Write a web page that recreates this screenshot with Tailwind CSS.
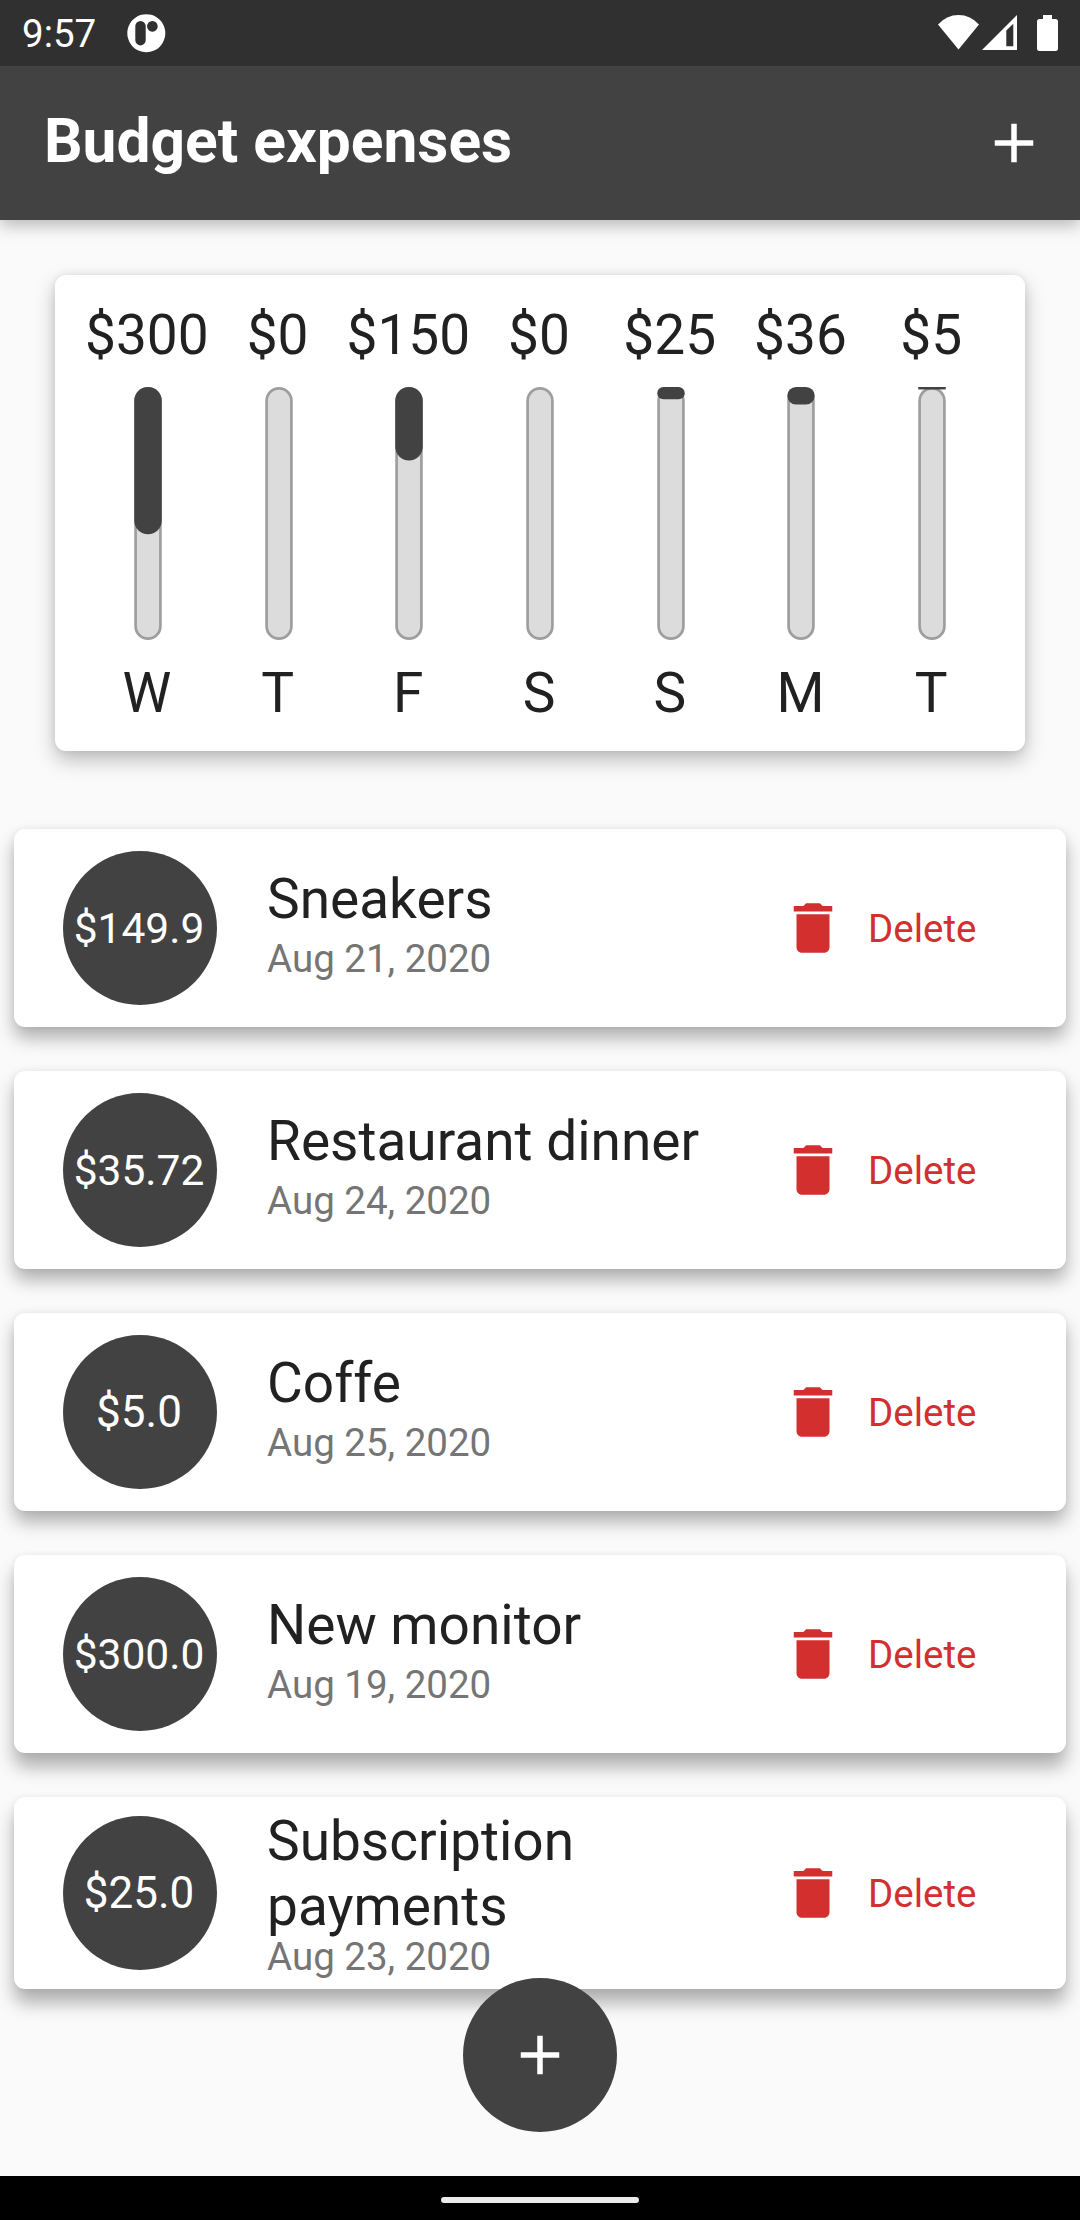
<!DOCTYPE html>
<html lang="en">
<head>
<meta charset="utf-8">
<title>Budget expenses</title>
<script src="https://cdn.jsdelivr.net/npm/@tailwindcss/browser@4"></script>
</head>
<body class="font-[Roboto,sans-serif] bg-[#fafafa] text-[#212121]">
<div class="relative flex h-[2220px] w-[1080px] flex-col overflow-hidden">

  <!-- Status bar -->
  <div class="relative z-10 flex h-[66px] shrink-0 items-center bg-[#303030] pl-[22px] text-white">
    <span class="w-[102px] pt-[1px] text-[38.5px] leading-[45px]">9:57</span>
    <svg class="h-[66px] w-11" viewBox="124 0 44 66"><path fill="#fff" fill-rule="evenodd" d="M146.300 14.200a19 19 0 1 0 .01 0zM140.500 21a5.200 5.200 0 0 1 5.200 5.200v14a5.200 5.200 0 0 1-10.400 0v-14a5.200 5.200 0 0 1 5.200-5.200zM152.400 21.100a5.300 5.300 0 1 1-.01 0z"/></svg>
    <svg class="ml-auto h-[66px] w-[150px]" viewBox="930 0 150 66" fill="#fff">
      <path d="M938 24.500Q946.500 15 958.500 15T979 24.500L958.500 49.500z"/>
      <path fill-rule="evenodd" d="M982 50L1017 15V50zM1006.300 30.500V46.300H1013.300V23.700z"/>
      <path d="M1043 15h9v4h3.500q2.500 0 2.500 2.500v27q0 2.500-2.500 2.500h-16q-2.500 0-2.500-2.500v-27q0-2.500 2.500-2.500h3.500z"/>
    </svg>
  </div>

  <!-- App bar -->
  <header class="flex h-[154px] shrink-0 items-center justify-between bg-[#424242] pr-[33px] pl-11 text-white shadow-[0_5px_16px_rgba(0,0,0,0.28)]">
    <h1 class="pb-[4px] text-[60.5px] leading-[71px] font-bold">Budget expenses</h1>
    <svg class="h-[66px] w-[66px]" viewBox="0 0 24 24" fill="#fff"><path d="M19 13h-6v6h-2v-6H5v-2h6V5h2v6h6v2z"/></svg>
  </header>

  <!-- Weekly chart -->
  <section id="chart" class="mx-[55px] mt-[55px] flex h-[476px] shrink-0 rounded-[11px] bg-white px-[27.5px] pt-7 shadow-[0_9px_20px_rgba(0,0,0,0.25),0_0_8px_rgba(0,0,0,0.08)]"></section>

  <!-- Expenses -->
  <main id="list" class="mx-[14px] mt-[78px] flex flex-col gap-11"></main>

  <!-- Add button -->
  <button class="absolute top-[1978px] left-[463px] flex size-[154px] items-center justify-center rounded-full bg-[#424242]">
    <svg class="h-[66px] w-[66px]" viewBox="0 0 24 24" fill="#fff"><path d="M19 13h-6v6h-2v-6H5v-2h6V5h2v6h6v2z"/></svg>
  </button>

  <!-- Navigation bar -->
  <footer class="mt-auto flex h-11 shrink-0 items-center justify-center bg-black pt-1">
    <div class="h-[6px] w-[198px] rounded-full bg-[#ebebeb]"></div>
  </footer>
</div>

<script>
const days = [['$300','W',0.582],['$0','T',0],['$150','F',0.291],['$0','S',0],['$25','S',0.0485],['$36','M',0.0695],['$5','T',0.0097]];
document.getElementById('chart').innerHTML = days.map(([amount, day, share]) => {
  const fill = 253 * share;
  const ry = fill > 5 ? Math.min(13.75, fill / 2) : 0;
  return `
  <div class="flex flex-1 flex-col items-center text-[55px] leading-[64px]">
    <span class="pr-[2px]">${amount}</span>
    <svg class="mt-5 h-[253px] w-[28px]" viewBox="0 0 28 253">
      <rect x="1.6" y="1.4" width="24.800" height="250.200" rx="12.400" fill="#dcdcdc" stroke="#9e9e9e" stroke-width="2.700"/>
      <rect x="0.25" y="0" width="27.500" height="${fill}" rx="${ry}" fill="#424242"/>
    </svg>
    <span class="mt-[21px] pr-[2px]">${day}</span>
  </div>`;
}).join('');

const near = 'shadow-[0_11px_18px_rgba(0,0,0,0.3),0_0_6px_rgba(0,0,0,0.06)]';
const far = 'shadow-[0_14px_18px_rgba(0,0,0,0.3),0_0_6px_rgba(0,0,0,0.06)]';
const items = [
  ['$149.9','Sneakers','Aug 21, 2020',near],
  ['$35.72','Restaurant dinner','Aug 24, 2020',near],
  ['$5.0','Coffe','Aug 25, 2020',near],
  ['$300.0','New monitor','Aug 19, 2020',far],
  ['$25.0','Subscription<br>payments','Aug 23, 2020',far],
];
document.getElementById('list').innerHTML = items.map(([amount, title, date, shadow]) => {
  const tall = title.includes('<br>');
  return `
  <article class="flex ${tall ? 'h-[192px]' : 'h-[198px]'} shrink-0 items-center rounded-[11px] bg-white pl-[49px] ${shadow}">
    <div class="flex size-[154px] items-center justify-center rounded-full bg-[#424242] pr-[2px] text-white ${amount.length > 5 ? 'pt-[2px] text-[42.5px]' : 'text-[44px]'}">${amount}</div>
    <div class="ml-[50px] w-[513px] ${tall ? 'pt-[2px]' : 'pb-2'}">
      <h2 class="text-[55px] leading-[64.4px]">${title}</h2>
      <p class="${tall ? '-mt-1' : 'mt-[5px]'} text-[38.5px] leading-[45px] text-[#757575]">${date}</p>
    </div>
    <button class="flex items-center gap-[22px] text-[38.5px] leading-[45px] text-[#d32f2f]">
      <svg class="h-[66px] w-[66px]" viewBox="0 0 24 24" fill="currentColor"><path d="M6 19c0 1.100.9 2 2 2h8c1.100 0 2-.9 2-2V7H6v12zM19 4h-3.500l-1-1h-5l-1 1H5v2h14V4z"/></svg>
      Delete
    </button>
  </article>`;
}).join('');
</script>
</body>
</html>
